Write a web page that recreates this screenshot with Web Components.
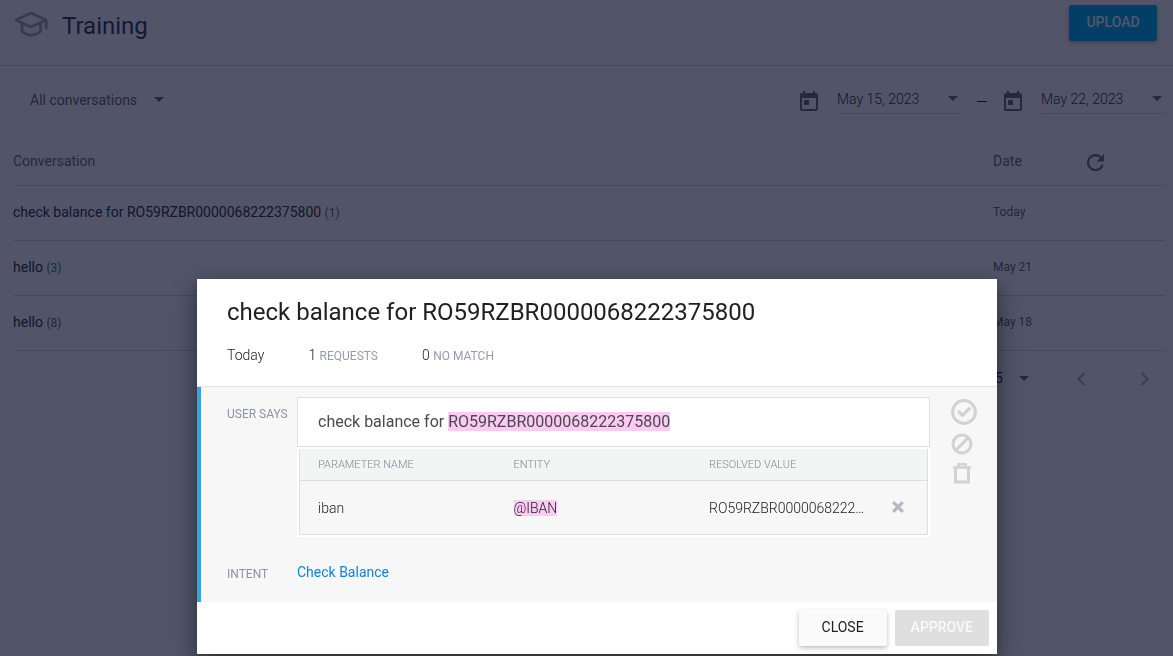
<!DOCTYPE html>
<html lang="en">
<head>
<meta charset="utf-8">
<meta name="viewport" content="width=device-width, initial-scale=1">
<title>Training</title>
<style>
  html, body { height: 100%; }
  body { margin: 0; overflow: hidden; background: #fff; font-family: Roboto, "Liberation Sans", sans-serif; font-size: 14px; line-height: 20px; color: #35405f; }
</style>
</head>
<body>
<training-page></training-page>
<modal-backdrop>
  <conversation-dialog></conversation-dialog>
</modal-backdrop>

<script>
const define = (name, html, setup) => customElements.define(name, class extends HTMLElement {
  constructor() {
    super();
    const t = document.createElement('template');
    t.innerHTML = html;
    this.attachShadow({ mode: 'open' }).append(t.content.cloneNode(true));
  }
  connectedCallback() { if (setup) setup(this, this.shadowRoot); }
});

const icons = {
  school: ['0 0 34 26', '<g fill="none" stroke="currentColor" stroke-width="2.8" stroke-linejoin="round"><path d="M2 9 17 2l15 7-15 7z"/><path d="M8 12v8.500q9 7.500 18.500 0V12M32.200 9v9"/></g>'],
  today: ['0 0 18 20', '<path fill="currentColor" fill-rule="evenodd" d="M16 2h-1V0h-2v2H5V0H3v2H2C.9 2 0 2.900 0 4v14c0 1.100.9 2 2 2h14c1.100 0 2-.9 2-2V4c0-1.100-.9-2-2-2zM16 18H2V7h14zM4 9h5v5H4z"/>'],
  refresh: ['4 4 16 16', '<path fill="currentColor" d="M17.650 6.350A7.960 7.960 0 0 0 12 4a8 8 0 1 0 7.730 10h-2.080A6 6 0 1 1 12 6c1.660 0 3.140.69 4.220 1.780L13 11h7V4z"/>'],
  caret: ['0 0 10 5', '<path fill="currentColor" d="M0 0h10L5 5z"/>'],
  prev: ['0 0 10 14', '<path fill="none" stroke="currentColor" stroke-width="2.200" d="M8.500 1 2.500 7l6 6"/>'],
  next: ['0 0 10 14', '<path fill="none" stroke="currentColor" stroke-width="2.200" d="m1.500 1 6 6-6 6"/>'],
  approve: ['0 0 26 26', '<g fill="none" stroke="currentColor"><circle cx="13" cy="13" r="11.400" stroke-width="3"/><path stroke-width="3.200" stroke-linecap="round" stroke-linejoin="round" d="m8 13 3.400 3.400 7-6.800"/></g>'],
  ignore: ['0 0 22 22', '<g fill="none" stroke="currentColor" stroke-width="3"><circle cx="11" cy="11" r="9"/><path d="M4.600 17.400 17.400 4.600"/></g>'],
  trash: ['0 0 18 21', '<g fill="none" stroke="currentColor" stroke-width="2.600"><path d="M0 4.500h18M5.500 4V1.300h7V4"/><path stroke-width="3" d="M2.500 5v14h13V5"/></g>'],
  cross: ['0 0 12 12', '<path fill="none" stroke="currentColor" stroke-width="3.200" d="m1.200 1.200 9.600 9.600m0-9.600-9.600 9.600"/>']
};
define('ui-icon', `<style>:host{display:inline-flex;flex:none}svg{display:block;width:100%;height:100%}</style><svg aria-hidden="true"></svg>`,
  (el, root) => {
    const [box, body] = icons[el.getAttribute('name')];
    const svg = root.querySelector('svg');
    svg.setAttribute('viewBox', box);
    svg.innerHTML = body;
  });

define('ui-button', `<style>
  :host{display:inline-flex}
  button{font:500 14px/34px Roboto,sans-serif;height:36px;min-width:88px;padding:0 16px 2px;border:0;border-radius:2px;background:#fafafa;color:#222;box-shadow:0 2px 5px rgba(0,0,0,.26);text-transform:uppercase;white-space:nowrap}
  :host([kind=primary]) button{background:#00b4fa;color:#fff}
  :host([kind=plain]) button{font-weight:400}
  button:disabled{background:#dfdfdf;color:#f9f9f9;box-shadow:none}
</style><button type="button"><slot></slot></button>`,
  (el, root) => { root.querySelector('button').disabled = el.hasAttribute('disabled'); });

define('select-field', `<style>
  :host{display:inline-flex;align-items:center;color:#666a75}
  select{appearance:none;border:0;background:none;padding:0;margin:0;font:400 14px/20px Roboto,sans-serif;color:inherit;width:var(--field,116px)}
  ui-icon{width:10px;height:5px;margin-left:8px;color:#6c7080}
</style><select><option></option></select><ui-icon name="caret"></ui-icon>`,
  (el, root) => {
    const s = root.querySelector('select');
    s.setAttribute('aria-label', el.getAttribute('label'));
    s.options[0].textContent = el.getAttribute('value');
  });

define('date-field', `<style>
  :host{display:flex;align-items:center;color:#3f475f}
  .day{width:18px;height:20px;margin:2px 19px 0 0;color:#6c7080}
  label{display:flex;align-items:center;box-sizing:border-box;width:124px;height:29px;border-bottom:1px solid #dcdcdc}
  input{flex:1;min-width:0;border:0;padding:0;background:none;font:300 14px/20px Roboto,sans-serif;color:#2c3448}
  .caret{width:10px;height:5px;margin:0 3px 2px;color:#6c7080}
</style><ui-icon class="day" name="today"></ui-icon><label><input type="text" readonly><ui-icon class="caret" name="caret"></ui-icon></label>`,
  (el, root) => {
    const i = root.querySelector('input');
    i.value = el.getAttribute('value');
    i.setAttribute('aria-label', el.getAttribute('label'));
  });

define('page-header', `<style>
  :host{display:block;border-bottom:1px solid #dedede}
  header{display:flex;align-items:center;height:65px;padding:0 16px 0 14px;box-sizing:border-box}
  ui-icon{width:34px;height:26px;color:#acadb5;margin:0 14px 18px 0}
  h1{flex:1;margin:0 0 14px;font-size:24px;line-height:32px;font-weight:400;color:#35405f}
  ui-button{margin-bottom:19px}
</style><header><ui-icon name="school"></ui-icon><h1><slot></slot></h1><ui-button kind="primary">Upload</ui-button></header>`);

define('filter-bar', `<style>
  :host{display:flex;align-items:center;box-sizing:border-box;height:71px;padding:0 8px 4px 30px}
  .range{display:flex;align-items:center;margin-left:auto}
  .dash{width:10px;height:1px;margin:4px 17px 0 16px;background:#202638}
</style><select-field label="Conversations" value="All conversations" style="--field:116px"></select-field>
<div class="range"><date-field label="From" value="May 15, 2023"></date-field><span class="dash"></span><date-field label="To" value="May 22, 2023"></date-field></div>`);

define('conversation-list', `<style>
  :host{display:block;padding:0 8px 0 13px}
  table{width:100%;border-collapse:collapse;table-layout:fixed}
  th,td{padding:0;text-align:left;font-weight:400;border-bottom:1px solid #dcdcdc}
  th{height:48px;color:#6c7080}
  td{height:52px;padding-bottom:2px;color:#35405f}
  td:first-child{color:#2c3448}
  .date{width:92px}.tool{width:80px}
  small,td.when{font-size:12px;color:#666a75}
  button{display:flex;border:0;background:none;padding:0;margin:2px 0 0 2px;color:#6c7080}
  button ui-icon{width:17px;height:17px}
</style><table><thead><tr><th>Conversation</th><th class="date">Date</th><th class="tool"><button type="button" aria-label="Refresh"><ui-icon name="refresh"></ui-icon></button></th></tr></thead>
<tbody>
<tr><td>check balance for RO59RZBR0000068222375800 <small>(1)</small></td><td class="when">Today</td><td></td></tr>
<tr><td>hello <small>(3)</small></td><td class="when">May 21</td><td></td></tr>
<tr><td>hello <small>(8)</small></td><td class="when">May 18</td><td></td></tr>
</tbody></table>`);

define('list-pager', `<style>
  :host{display:flex;justify-content:flex-end;align-items:center;height:56px;padding-right:23px}
  select-field{color:#2c3448;margin:0 47px 2px 0}
  button{display:flex;border:0;background:none;padding:0;color:#b4b6bf}
  button + button{margin-left:54px}
  ui-icon{width:10px;height:14px}
</style><select-field label="Rows per page" value="5" style="--field:16px"></select-field>
<button type="button" aria-label="Previous page"><ui-icon name="prev"></ui-icon></button>
<button type="button" aria-label="Next page"><ui-icon name="next"></ui-icon></button>`);

define('training-page', `<style>:host{display:block}</style>
<page-header>Training</page-header><filter-bar></filter-bar><conversation-list></conversation-list><list-pager></list-pager>`);

define('modal-backdrop', `<style>
  :host{position:fixed;inset:0;display:flex;justify-content:center;align-items:flex-end;padding:0 0 2px 21px;background:rgba(5,9,36,.69)}
</style><slot></slot>`);

define('dialog-header', `<style>
  :host{display:block;padding:17px 30px 20px;border-bottom:1px solid #e3e3e3}
  h2{margin:0;font-size:24px;line-height:32px;font-weight:400;color:#212121}
  .meta{display:flex;gap:44px;margin-top:17px;font-weight:300;color:#212121}
  small{font-size:12px;font-weight:400;color:#959cad}
</style><h2><slot></slot></h2><div class="meta"><span>Today</span><span>1 <small>REQUESTS</small></span><span>0 <small>NO MATCH</small></span></div>`);

define('param-table', `<style>
  :host{display:block;padding:2px;background:#fff}
  table{width:100%;border-collapse:separate;border-spacing:0;table-layout:fixed;background:#f7f7f7;border:1px solid #dcdedf;border-top:0}
  th,td{padding:0 0 0 18px;text-align:left;font-weight:300;color:#212121}
  th{height:31px;font-size:11px;font-weight:300;color:#7f8a96;background:#f3f5f5;border-bottom:1px solid #dcdedf}
  td{height:53px}
  .value{width:160px}.tool{width:40px}
  td{white-space:nowrap}
  mark{background:#fbcbf3;color:inherit}
  button{display:flex;border:0;padding:0;margin:0 0 2px 5px;background:none;color:#b4bac1}
  ui-icon{width:12px;height:12px}
</style><table><thead><tr><th>PARAMETER NAME</th><th>ENTITY</th><th class="value">RESOLVED VALUE</th><th class="tool"></th></tr></thead>
<tbody><tr><td>iban</td><td><mark>@IBAN</mark></td><td>RO59RZBR0000068222…</td><td><button type="button" aria-label="Remove parameter"><ui-icon name="cross"></ui-icon></button></td></tr></tbody></table>`);

define('request-panel', `<style>
  :host{display:grid;grid-template-columns:70px minmax(0,1fr) 46px;row-gap:25px;padding:10px 21px 18px 26px;border-left:4px solid #37a2e8;background:#f7f7f7}
  .label{font-size:12px;line-height:20px;color:#8a93a3}
  .label.says{padding-top:7px}
  .says-box{box-sizing:border-box;height:50px;padding:0 20px;border:1px solid #dcdedf;background:#fff;font-size:16px;line-height:48px;color:#4a4a4a}
  mark{background:#fbcbf3;color:inherit}
  .actions{display:flex;flex-direction:column;align-items:flex-start;padding:2px 0 0 21px;color:#d2d2d2}
  .actions button{display:flex;border:0;padding:0;background:none;color:inherit}
  .a ui-icon{width:26px;height:26px}
  .b{margin-top:8px}.b ui-icon{width:22px;height:22px}
  .c{margin:8px 0 0 2px}.c ui-icon{width:18px;height:21px}
  a{color:#0f83dc;text-decoration:none}
  .intent{padding-top:2px}
</style>
<span class="label says" id="says">USER SAYS</span>
<div><div class="says-box" role="textbox" contenteditable="true" spellcheck="false" aria-labelledby="says">check balance for <mark>RO59RZBR0000068222375800</mark></div><param-table></param-table></div>
<div class="actions"><button type="button" class="a" aria-label="Approve"><ui-icon name="approve"></ui-icon></button><button type="button" class="b" aria-label="Ignore"><ui-icon name="ignore"></ui-icon></button><button type="button" class="c" aria-label="Delete"><ui-icon name="trash"></ui-icon></button></div>
<span class="label intent">INTENT</span><a href="#intent">Check Balance</a>`);

define('conversation-dialog', `<style>
  :host{display:block;width:100%;max-width:800px}
  dialog{position:static;display:block;width:auto;max-width:none;margin:0;padding:0;border:0;background:#fff;color:#212121;box-shadow:0 7px 16px rgba(0,0,0,.3),0 10px 28px rgba(0,0,0,.25)}
  footer{display:flex;justify-content:flex-end;gap:8px;padding:8px}
</style><dialog open aria-label="Conversation">
<dialog-header>check balance for RO59RZBR0000068222375800</dialog-header>
<request-panel></request-panel>
<footer><ui-button kind="plain">Close</ui-button><ui-button disabled>Approve</ui-button></footer>
</dialog>`);
</script>
</body>
</html>
